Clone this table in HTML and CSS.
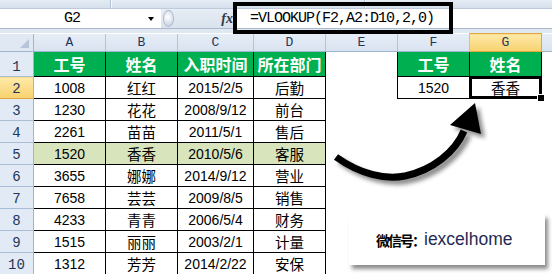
FILE: index.html
```html
<!DOCTYPE html>
<html>
<head>
<meta charset="utf-8">
<link rel="stylesheet" href="styles.css">
</head>
<body>
<div class="app">
  <div class="ribbon-edge"><span class="sep s1"></span><span class="sep s2"></span></div>
  <div class="formula-row">
    <div class="namebox"><span class="ref">G2</span><span class="dd"></span></div>
    <div class="fb-mid"><span class="grip"></span><span class="fx">fx</span></div>
    <div class="fb-input">=VLOOKUP(F2,A2:D10,2,0)</div>
  </div>
  <div class="fb-under"></div>

  <table class="sheet">
    <colgroup>
      <col class="w-rh"><col class="w72"><col class="w72"><col class="w76"><col class="w72"><col class="w72"><col class="w72"><col class="w72"><col>
    </colgroup>
    <tr class="r-hdr">
      <th class="corner"><span class="tri"></span></th>
      <th class="ch">A</th><th class="ch">B</th><th class="ch">C</th><th class="ch">D</th><th class="ch">E</th><th class="ch">F</th><th class="ch sel">G</th><th class="ch last"></th>
    </tr>
    <tr>
      <th class="rh">1</th>
      <td class="t g">工号</td><td class="t g">姓名</td><td class="t g">入职时间</td><td class="t g">所在部门</td>
      <td></td>
      <td class="t g">工号</td><td class="t g">姓名</td><td></td>
    </tr>
    <tr>
      <th class="rh sel">2</th>
      <td class="t">1008</td><td class="t cn">红红</td><td class="t">2015/2/5</td><td class="t cn">后勤</td>
      <td></td>
      <td class="t">1520</td><td class="t cn active">香香</td><td></td>
    </tr>
    <tr>
      <th class="rh">3</th>
      <td class="t">1230</td><td class="t cn">花花</td><td class="t">2008/9/12</td><td class="t cn">前台</td>
      <td></td><td></td><td></td><td></td>
    </tr>
    <tr class="short">
      <th class="rh">4</th>
      <td class="t">2261</td><td class="t cn">苗苗</td><td class="t">2011/5/1</td><td class="t cn">售后</td>
      <td></td><td></td><td></td><td></td>
    </tr>
    <tr>
      <th class="rh">5</th>
      <td class="t hl">1520</td><td class="t cn hl">香香</td><td class="t hl">2010/5/6</td><td class="t cn hl">客服</td>
      <td></td><td></td><td></td><td></td>
    </tr>
    <tr>
      <th class="rh">6</th>
      <td class="t">3655</td><td class="t cn">娜娜</td><td class="t">2014/9/12</td><td class="t cn">营业</td>
      <td></td><td></td><td></td><td></td>
    </tr>
    <tr>
      <th class="rh">7</th>
      <td class="t">7658</td><td class="t cn">芸芸</td><td class="t">2009/8/5</td><td class="t cn">销售</td>
      <td></td><td></td><td></td><td></td>
    </tr>
    <tr class="short">
      <th class="rh">8</th>
      <td class="t">4233</td><td class="t cn">青青</td><td class="t">2006/5/4</td><td class="t cn">财务</td>
      <td></td><td></td><td></td><td></td>
    </tr>
    <tr>
      <th class="rh">9</th>
      <td class="t">1515</td><td class="t cn">丽丽</td><td class="t">2003/2/1</td><td class="t cn">计量</td>
      <td></td><td></td><td></td><td></td>
    </tr>
    <tr>
      <th class="rh">10</th>
      <td class="t">1312</td><td class="t cn">芳芳</td><td class="t">2014/2/22</td><td class="t cn">安保</td>
      <td></td><td></td><td></td><td></td>
    </tr>
    <tr class="r-tail">
      <th class="rh"></th><td></td><td></td><td></td><td></td><td></td><td></td><td></td><td></td>
    </tr>
  </table>

  <div class="formula-callout"></div>

  <svg class="arrow" width="552" height="274" viewBox="0 0 552 274" aria-hidden="true">
    <defs>
      <filter id="sh" x="-20%" y="-20%" width="150%" height="150%">
        <feDropShadow dx="4" dy="4" stdDeviation="2.2" flood-color="#000" flood-opacity="0.45"/>
      </filter>
    </defs>
    <g filter="url(#sh)">
      <path d="M336,157 C360,174 385,180 405,176 C433,170 455,152 464,131" fill="none" stroke="#000" stroke-width="7"/>
      <polygon points="475,103 450,125 481,134" fill="#000"/>
    </g>
  </svg>

  <div class="note"><span class="lbl">微信号：</span><span class="id">iexcelhome</span></div>
</div>
</body>
</html>
```

FILE: styles.css
```css
* { box-sizing: border-box; }
html, body { margin: 0; padding: 0; }
body {
  width: 552px;
  height: 274px;
  overflow: hidden;
  background: #fff;
  font-family: "Liberation Sans", "Noto Sans CJK SC", sans-serif;
}
.app {
  position: relative;
  width: 552px;
  height: 274px;
  overflow: hidden;
}

/* top strip */
.ribbon-edge {
  height: 9px;
  display: flex;
  background: linear-gradient(#e4ebf4, #d6e0ec);
  border-bottom: 1px solid #bccadb;
}
.sep { width: 2px; height: 8px; border-left: 1px solid #b4c3d6; border-right: 1px solid #f4f7fb; }
.s1 { margin-left: 110px; }
.s2 { margin-left: 252px; }

/* formula bar */
.formula-row {
  display: flex;
  height: 20px;
  border-bottom: 1px solid #a9b8cb;
  background: #dfe6ef;
}
.namebox {
  width: 161px;
  background: #fff;
  display: flex;
  align-items: center;
}
.ref {
  width: 144px;
  text-align: center;
  font-family: "Liberation Mono", monospace;
  font-size: 15px;
  letter-spacing: -1px;
  color: #000;
}
.dd {
  width: 0;
  height: 0;
  margin-left: 4px;
  border-left: 3.5px solid transparent;
  border-right: 3.5px solid transparent;
  border-top: 4px solid #000;
}
.fb-mid {
  width: 72px;
  display: flex;
  align-items: center;
  background: linear-gradient(#e7edf5, #d9e2ee);
}
.grip {
  width: 13px;
  height: 17px;
  margin-left: 2px;
  border-radius: 50%;
  border: 1px solid #aebbcc;
  background: radial-gradient(circle at 40% 40%, #ffffff, #d3dbe6 70%, #b9c5d4);
}
.fx {
  margin-left: 47px;
  font-family: "Liberation Serif", serif;
  font-style: italic;
  font-weight: bold;
  font-size: 14px;
  color: #2f3a4a;
}
.fb-input {
  flex: 1;
  background: #fff;
  padding-left: 17px;
  font-family: "Liberation Mono", monospace;
  font-size: 15px;
  letter-spacing: -1px;
  line-height: 19px;
  color: #000;
  white-space: nowrap;
}
.fb-under {
  height: 4px;
  background: #dfe7f1;
}

/* callout box around formula */
.formula-callout {
  position: absolute;
  left: 233px;
  top: 2px;
  width: 220px;
  height: 32px;
  border: 4px solid #000;
}

/* sheet */
.sheet {
  width: 552px;
  table-layout: fixed;
  border-collapse: collapse;
  border-spacing: 0;
}
.w-rh { width: 33.5px; }
.w72 { width: 72px; }
.w76 { width: 76px; }

.sheet tr { height: 22px; }
.sheet tr.short { height: 21px; }
.sheet .r-hdr { height: 18px; }
.sheet .r-tail { height: 12px; }

.sheet th, .sheet td { padding: 0; }

.corner {
  background: #dfe8f3;
  border-right: 1px solid #9eb6ce;
  border-bottom: 1px solid #9eb6ce;
  text-align: right;
  vertical-align: bottom;
  padding: 0 4px 3px 0 !important;
  line-height: 0;
}
.tri {
  display: inline-block;
  width: 0;
  height: 0;
  border-left: 9px solid transparent;
  border-bottom: 9px solid #b5c4d7;
}
.ch {
  background: linear-gradient(#e6edf6, #d9e3f0);
  border-right: 1px solid #b3c4d8;
  border-bottom: 1px solid #9eb6ce;
  font-family: "Liberation Mono", monospace;
  font-weight: normal;
  font-size: 13px;
  color: #1f3659;
  text-align: center;
  vertical-align: middle;
}
.ch.sel {
  background: linear-gradient(#fde9a8, #f7d26e);
  border: 1px solid #e0a842;
}
.ch.last { border-right: none; }

.rh {
  background: #e2eaf5;
  border-right: 1px solid #9eb6ce;
  border-bottom: 1px solid #a9bed4;
  font-family: "Liberation Mono", monospace;
  font-weight: normal;
  font-size: 14px;
  color: #1f3659;
  text-align: center;
  vertical-align: bottom;
  padding-bottom: 1px !important;
  line-height: 16px;
}
.rh.sel {
  background: linear-gradient(#fde9a8, #f7d26e);
  border-bottom: 1px solid #e0a842;
}

.t {
  border: 1px solid #000;
  text-align: center;
  vertical-align: middle;
  font-size: 14px;
  color: #000;
  white-space: nowrap;
}
.cn {
  font-family: "Noto Sans CJK SC", sans-serif;
  font-size: 14.5px;
}
.g {
  background: #00b050;
  color: #fff;
  font-family: "Noto Sans CJK SC", sans-serif;
  font-weight: bold;
  font-size: 16px;
}
.hl { background: #d8e4bc; }

.active {
  position: relative;
  box-shadow: inset 0 0 0 2px #000;
}
.active::after {
  content: "";
  position: absolute;
  right: -4px;
  bottom: -4px;
  width: 6px;
  height: 6px;
  background: #000;
  border: 1px solid #fff;
}

/* arrow overlay */
.arrow {
  position: absolute;
  left: 0;
  top: 0;
  pointer-events: none;
}

/* note card */
.note {
  position: absolute;
  left: 349px;
  top: 214px;
  width: 196px;
  height: 51px;
  background: #fff;
  box-shadow: 3px 4px 4px rgba(0, 0, 0, 0.45);
  display: flex;
  align-items: center;
  padding-left: 27px;
}
.lbl {
  font-family: "Noto Sans CJK SC", sans-serif;
  font-weight: bold;
  font-size: 14px;
  color: #000;
  letter-spacing: -2px;
}
.id {
  font-family: "Liberation Sans", sans-serif;
  font-size: 17.5px;
  color: #1f2b55;
}
```
